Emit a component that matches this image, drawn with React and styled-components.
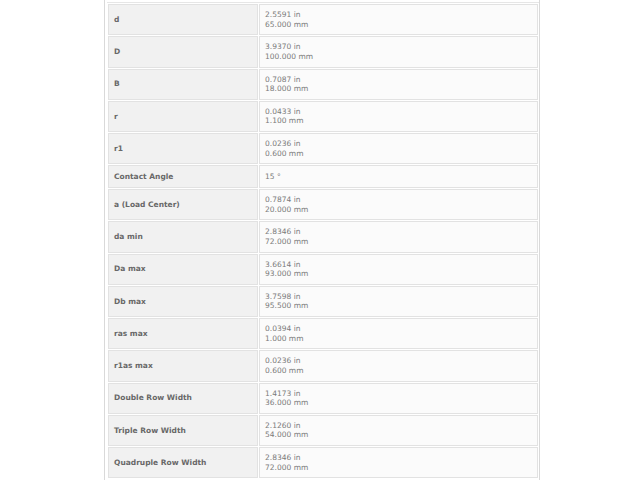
import React from "react";
import styled, { createGlobalStyle } from "styled-components";

const Global = createGlobalStyle`
  html, body { margin: 0; padding: 0; background: #ffffff; }
  body { font-family: "DejaVu Sans", Verdana, sans-serif; }
`;

const Wrapper = styled.div`
  margin-left: 104px;
  width: 432px;
  border-left: 1px solid #d9d9d9;
  border-right: 1px solid #d9d9d9;
  padding: 2px 0 0 2px;
  min-height: 480px;
  box-sizing: content-box;
`;

const Table = styled.table`
  border-collapse: separate;
  border-spacing: 1px;
  width: 432px;
  table-layout: fixed;
  border-top: 1px solid #e6e6e6;
`;

const LabelCell = styled.td`
  width: 138px;
  background: #f1f1f1;
  border: 1px solid #e2e2e2;
  padding: ${(p) => (p.$single ? "5.625px" : "5.125px")} 5px;
  font-size: 7.5px;
  line-height: 9.5px;
  font-weight: bold;
  color: #686868;
  vertical-align: middle;
`;

const ValueCell = styled.td`
  background: #fbfbfb;
  border: 1px solid #e2e2e2;
  padding: ${(p) => (p.$single ? "5.625px" : "5.125px")} 5px;
  font-size: 7.5px;
  line-height: 9.5px;
  color: #7a7a7a;
  vertical-align: middle;
`;

const Line = styled.div`
  white-space: nowrap;
`;

const rows = [
  ["d", "2.5591 in", "65.000 mm"],
  ["D", "3.9370 in", "100.000 mm"],
  ["B", "0.7087 in", "18.000 mm"],
  ["r", "0.0433 in", "1.100 mm"],
  ["r1", "0.0236 in", "0.600 mm"],
  ["Contact Angle", "15 °"],
  ["a (Load Center)", "0.7874 in", "20.000 mm"],
  ["da min", "2.8346 in", "72.000 mm"],
  ["Da max", "3.6614 in", "93.000 mm"],
  ["Db max", "3.7598 in", "95.500 mm"],
  ["ras max", "0.0394 in", "1.000 mm"],
  ["r1as max", "0.0236 in", "0.600 mm"],
  ["Double Row Width", "1.4173 in", "36.000 mm"],
  ["Triple Row Width", "2.1260 in", "54.000 mm"],
  ["Quadruple Row Width", "2.8346 in", "72.000 mm"],
];

export default function App() {
  return (
    <>
      <Global />
      <Wrapper>
        <Table>
          <tbody>
            {rows.map(([label, ...vals]) => {
              const single = vals.length === 1;
              return (
                <tr key={label}>
                  <LabelCell $single={single}>{label}</LabelCell>
                  <ValueCell $single={single}>
                    {vals.map((v) => (
                      <Line key={v}>{v}</Line>
                    ))}
                  </ValueCell>
                </tr>
              );
            })}
          </tbody>
        </Table>
      </Wrapper>
    </>
  );
}
